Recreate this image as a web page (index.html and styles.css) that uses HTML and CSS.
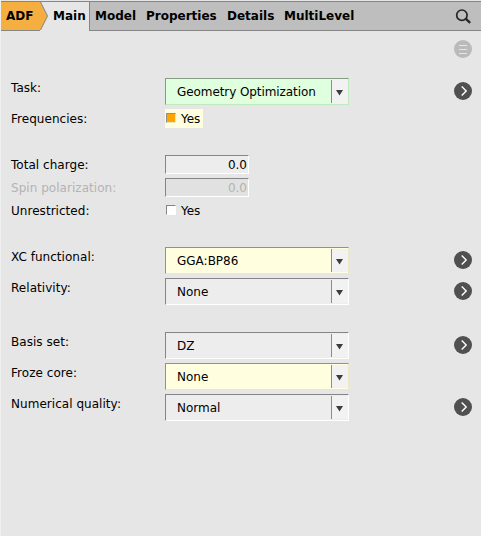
FILE: index.html
```html
<!DOCTYPE html>
<html lang="en">
<head>
<meta charset="utf-8">
<title>ADF Main</title>
<link rel="stylesheet" href="styles.css">
</head>
<body>
<svg class="defs" aria-hidden="true">
  <symbol id="go" viewBox="0 0 18 18"><circle cx="9" cy="9" r="9" fill="#505050"/><path d="M7.7 4.5 12.2 9 7.7 13.5" fill="none" stroke="#fff" stroke-width="1.4"/></symbol>
  <symbol id="drop" viewBox="0 0 7 6"><path d="M0 0h7L3.5 5.5z" fill="#3c3c3c"/></symbol>
</svg>
<nav class="tabs">
  <div class="tab adf"><svg class="tag" width="48" height="28" viewBox="0 0 48 28"><path d="M0 0H39.5L46.5 14 39.5 28H0z" fill="#f5af41"/><path d="M39.5 0 46.5 14 39.5 28" fill="none" stroke="#858585"/></svg><span class="name">ADF</span></div>
  <div class="tab main">Main</div>
  <div class="tab model">Model</div>
  <div class="tab properties">Properties</div>
  <div class="tab details">Details</div>
  <div class="tab multilevel">MultiLevel</div>
  <svg class="search" width="16" height="16" viewBox="0 0 16 16" fill="none" stroke="#262626"><circle cx="6.9" cy="6.2" r="5.2" stroke-width="1.7"/><path d="M10.6 9.7 15.2 13.9" stroke-width="2.3"/></svg>
</nav>
<main class="panel">
  <div class="tools"><svg width="18" height="18" viewBox="0 0 18 18"><circle cx="9" cy="9" r="9" fill="#bababa"/><path d="M5 5.5h8M5 9.5h8M5 13.5h8" stroke="#e6e6e6"/></svg></div>
  <div class="row"><label>Task:</label><div class="select green"><span>Geometry Optimization</span><i><svg><use href="#drop"/></svg></i></div><svg class="go"><use href="#go"/></svg></div>
  <div class="row short end"><label>Frequencies:</label><div class="check on"><b></b>Yes</div></div>
  <div class="row short"><label>Total charge:</label><div class="entry">0.0</div></div>
  <div class="row short disabled"><label>Spin polarization:</label><div class="entry">0.0</div></div>
  <div class="row short end"><label>Unrestricted:</label><div class="check"><b></b>Yes</div></div>
  <div class="row"><label>XC functional:</label><div class="select yellow"><span>GGA:BP86</span><i><svg><use href="#drop"/></svg></i></div><svg class="go"><use href="#go"/></svg></div>
  <div class="row end"><label>Relativity:</label><div class="select"><span>None</span><i><svg><use href="#drop"/></svg></i></div><svg class="go"><use href="#go"/></svg></div>
  <div class="row"><label>Basis set:</label><div class="select"><span>DZ</span><i><svg><use href="#drop"/></svg></i></div><svg class="go"><use href="#go"/></svg></div>
  <div class="row"><label>Froze core:</label><div class="select yellow"><span>None</span><i><svg><use href="#drop"/></svg></i></div></div>
  <div class="row"><label>Numerical quality:</label><div class="select"><span>Normal</span><i><svg><use href="#drop"/></svg></i></div><svg class="go"><use href="#go"/></svg></div>
</main>
</body>
</html>
```
FILE: styles.css
```css
* { box-sizing: border-box; }
html { height: 100%; }
body {
  margin: 0;
  height: 100%;
  padding-top: 1px;
  overflow: hidden;
  background: #e6e6e6;
  border-left: 1px solid #f0f0f0;
  font: 12px "DejaVu Sans", sans-serif;
  color: #000;
}
.defs { display: none; }
svg { display: block; }
.tabs {
  display: flex;
  height: 30px;
  background: #bebebe;
  border-top: 1px solid #858585;
  font-weight: bold;
}
.tab {
  height: 29px;
  line-height: 28px;
  border-bottom: 1px solid #858585;
  white-space: nowrap;
}
.adf { position: relative; width: 39px; padding-left: 5px; background: #f5af41; }
.tag { position: absolute; left: 0; top: 0; }
.name { position: relative; }
.main { width: 50px; padding-left: 13px; background: #e6e6e6; border-right: 1px solid #858585; border-bottom: 0; }
.model { width: 51px; padding-left: 5px; }
.properties { width: 81px; padding-left: 5px; }
.details { width: 57px; padding-left: 5px; }
.multilevel { flex: 1; padding-left: 5px; }
.search { width: 26px; height: 29px; padding: 7px 10px 5px 0; border-bottom: 1px solid #858585; }
.panel { padding: 9px 0 0 10px; }
.tools { height: 38px; padding-left: 443px; }
.row { display: flex; height: 27px; margin-bottom: 4px; }
.row.short { height: 19px; }
.row.end { margin-bottom: 27px; }
label { width: 154px; line-height: 21px; letter-spacing: .04px; }
.select {
  display: flex;
  justify-content: space-between;
  width: 184px;
  height: 27px;
  padding-left: 11px;
  line-height: 26px;
  background: #ededed;
  border: 1px solid;
  border-color: #858585 #fff #fff #858585;
}
.green { background: #dfffdf; border-color: #849d84 #bfeabf #bfeabf #849d84; letter-spacing: -.08px; }
.yellow { background: #ffffdf; border-color: #929282 #eaeac3 #eaeac3 #929282; }
.select i {
  width: 17px;
  margin: 1px 0;
  padding: 10px 0 0 4px;
  background: #f2f2f2;
  border-left: 1px solid #8c8c8c;
}
.select i svg { width: 7px; height: 6px; }
.go { width: 18px; height: 18px; margin: 4px 0 0 105px; }
.entry {
  width: 84px;
  padding-right: 1px;
  line-height: 19px;
  text-align: right;
  background: #ededed;
  border: 1px solid;
  border-color: #858585 #fff #fff #858585;
}
.disabled { color: #b3b3b3; }
.disabled .entry { background: #e1e1e1; }
.check { display: flex; width: 38px; padding-left: 1px; gap: 5px; line-height: 21px; }
.check.on { background: #ffffdf; }
.check b {
  width: 10px;
  height: 10px;
  margin-top: 4px;
  background: #fff;
  border: 1px solid;
  border-color: #858585 #fff #fff #858585;
}
.check.on b { background: orange; border-color: #929282 #eaeac3 #eaeac3 #929282; }
```
